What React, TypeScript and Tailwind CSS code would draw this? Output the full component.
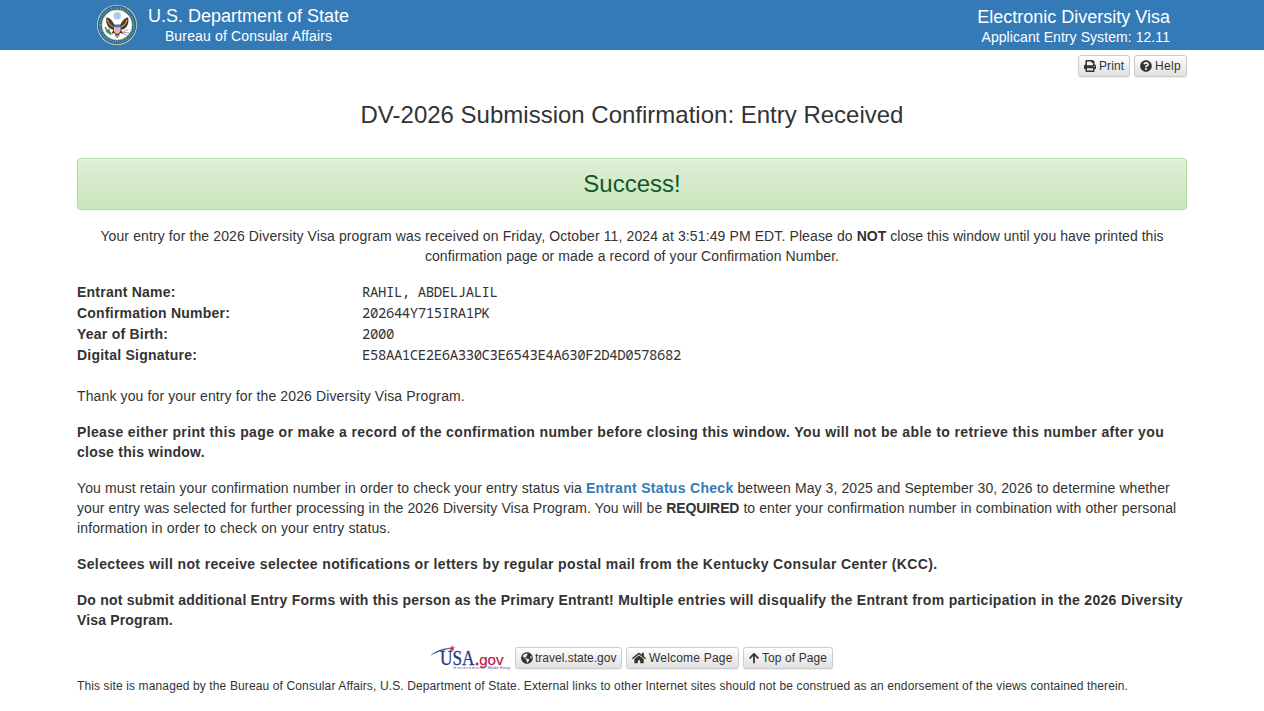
import type { ReactNode } from "react";
import { FaPrint, FaQuestionCircle, FaGlobeAmericas, FaHome, FaArrowUp } from "react-icons/fa";

function SealLogo() {
  return (
    <svg viewBox="0 0 40 40" className="block h-10 w-10">
      <circle cx="20" cy="20" r="20" fill="#d5dc9c" />
      <circle cx="20" cy="20" r="19.2" fill="#22649a" />
      <circle cx="20" cy="20" r="17" fill="none" stroke="#c9cd8e" strokeWidth="2" strokeDasharray="1 1.3" opacity=".6" />
      <circle cx="20" cy="20" r="15" fill="#fff" stroke="#ddd9a0" strokeWidth=".7" />
      <circle cx="20.3" cy="10.8" r="3.8" fill="#a3cdee" stroke="#cfe0e4" strokeWidth=".8" />
      <path d="M17.5 20C16 17.5 14.5 13 9.5 12.5C8.5 16 9.5 20.5 13 23.5L16.5 25L14 29L17.5 28L18.5 30H22L23 28L26.5 29L24 25L28 23.5C31.5 20.5 32 16 31 12.5C26.5 13 25 17.5 23 20Z" fill="#51372b" />
      <path d="M10.5 14.5C11 18 13.5 20.5 16.5 22M30 14.5C29.5 18 27 20.5 24 22" stroke="#c39a68" strokeWidth="1.2" fill="none" />
      <path d="M17.8 15.8L20.3 14.6L22.6 16L22.4 20H18Z" fill="#fff" />
      <path d="M17 21.5H23.5V25.5C23 28 20.2 29 20.2 29C20.2 29 17.3 28 17 25.5Z" fill="#f4cdd3" />
      <path d="M17 19.5H23.5V22.3H17Z" fill="#4670ab" />
      <path d="M18.7 22.5V27.5M20.3 22.5V28.5M21.9 22.5V27.5" stroke="#d98391" strokeWidth=".6" />
      <path d="M14 28C11 28 9.5 25 8.2 22M9 26L13 28.5L11.5 24" stroke="#4d8560" strokeWidth="1.7" fill="none" />
      <path d="M26 26.5L31.5 24.5M26 27.5L32 27.5M26 28.5L31 30.5" stroke="#9aa1a6" strokeWidth=".9" />
      <path d="M17.5 30L20.2 33.5L23 30Z" fill="#b98e5a" />
    </svg>
  );
}

function UsaGovLogo() {
  return (
    <svg viewBox="0 0 82 26" className="block h-[26px] w-[82px] shrink-0">
      <path d="M2 10C9 4.8 16 2.6 23 3.4C16 4 10 6 2 10Z" fill="#34438b" stroke="#34438b" strokeWidth=".3" />
      <path d="M23.3 0L23.9 2.4L26.2 2.2L24.4 3.8L25.1 6L23 4.9L21 6.2L21.7 4L20 2.7L22.3 2.5Z" fill="#cf2149" />
      <text x="11" y="20" fontFamily="Liberation Serif, serif" fontSize="20" fill="#29367f" stroke="#29367f" strokeWidth=".3" textLength="34.5" lengthAdjust="spacingAndGlyphs">USA</text>
      <text x="46" y="20" fontFamily="Liberation Sans, sans-serif" fontSize="15.5" fill="#bf1942" stroke="#bf1942" strokeWidth=".25" textLength="28.5" lengthAdjust="spacingAndGlyphs"><tspan fontWeight="700">.</tspan>gov</text>
      <text x="24" y="24.3" fontFamily="Liberation Sans, sans-serif" fontSize="4.3" fill="#4c578f" textLength="31">Government</text>
      <text x="58.5" y="24.3" fontFamily="Liberation Sans, sans-serif" fontSize="4.3" fill="#4c578f" textLength="22.5">Made Easy</text>
    </svg>
  );
}

function Button({ icon, children, className }: { icon: ReactNode; children: ReactNode; className: string }) {
  return (
    <button className={`flex h-[22px] items-center gap-[3px] whitespace-nowrap rounded-[3px] border border-[#ccc] bg-linear-to-b from-white to-[#e0e0e0] pl-[5px] text-xs leading-[18px] text-[#333] shadow-[inset_0_1px_0_rgba(255,255,255,.15),0_1px_1px_rgba(0,0,0,.075)] ${className}`}>
      <span className="flex pb-px">{icon}</span><span>{children}</span>
    </button>
  );
}

const details = [
  ["Entrant Name:", "RAHIL, ABDELJALIL"],
  ["Confirmation Number:", "202644Y715IRA1PK"],
  ["Year of Birth:", "2000"],
  ["Digital Signature:", "E58AA1CE2E6A330C3E6543E4A630F2D4D0578682"],
];

export default function App() {
  return (
    <div className="h-[711px] overflow-hidden bg-white font-['Liberation_Sans',Arial,sans-serif] text-sm leading-5 text-[#333]">
      <header className="flex h-[50px] justify-between bg-[#337ab7] pl-[97px] pr-[94px] pt-[5px] text-white">
        <div className="flex gap-[11px]">
          <SealLogo />
          <div className="text-center">
            <div className="text-lg leading-[22px]">U.S. Department of State</div>
            <div className="leading-[18px] tracking-[.16px]">Bureau of Consular Affairs</div>
          </div>
        </div>
        <div className="pt-px text-right">
          <div className="text-lg leading-[22px]">Electronic Diversity Visa</div>
          <div className="leading-[18px] tracking-[.07px]">Applicant Entry System: 12.11</div>
        </div>
      </header>
      <main className="mx-auto w-[1110px]">
        <nav className="flex justify-end gap-1 pt-[5px]">
          <Button icon={<FaPrint />} className="w-[52px] tracking-[.1px]">Print</Button>
          <Button icon={<FaQuestionCircle />} className="w-[53px] tracking-[.3px]">Help</Button>
        </nav>
        <h1 className="mt-[25px] text-center text-2xl leading-[26px]">DV-2026 Submission Confirmation: Entry Received</h1>
        <div className="mt-[30px] flex h-[52px] items-center justify-center rounded border border-[#b2dba1] bg-linear-to-b from-[#dff0d8] to-[#c8e5bc] text-2xl text-[#155724] shadow-[inset_0_1px_0_rgba(255,255,255,.25),0_1px_2px_rgba(0,0,0,.05)]">Success!</div>
        <p className="mt-4 whitespace-nowrap text-center tracking-[.11px]">
          Your entry for the 2026 Diversity Visa program was received on Friday, October 11, 2024 at 3:51:49 PM EDT. Please do <b className="tracking-normal">NOT</b><span className="tracking-[.04px]"> close this window until you have printed this</span><br /><span className="tracking-[.09px]">confirmation page or made a record of your Confirmation Number.</span>
        </p>
        <dl className="mt-4 grid grid-cols-[285px_1fr]">
          {details.map(([label, value]) => (
            <div key={label} className="col-span-2 grid h-[21px] grid-cols-subgrid">
              <dt className="font-bold tracking-[.23px]">{label}</dt>
              <dd className="font-['Noto_Sans_Mono','DejaVu_Sans_Mono',monospace] text-[14px] tracking-[-.425px]">{value}</dd>
            </div>
          ))}
        </dl>
        <p className="mt-5 tracking-[.125px]">Thank you for your entry for the 2026 Diversity Visa Program.</p>
        <p className="mt-4 whitespace-nowrap font-bold tracking-[.378px]"><span className="tracking-[.366px]">Please either print this page or make a record of the confirmation number before closing this window.</span><span className="tracking-[.4px]"> You will not be able to retrieve this number after you</span><br /><span className="tracking-[.26px]">close this window.</span></p>
        <p className="mt-4 whitespace-nowrap tracking-[.112px]">
          You must retain your confirmation number in order to check your entry status via <a className="font-bold tracking-[.3px] text-[#337ab7]">Entrant Status Check</a><span className="tracking-[.08px]"> between May 3, 2025 and September 30, 2026 to determine whether</span><br />
          <span className="tracking-[.095px]">your entry was selected for further processing in the 2026 Diversity Visa Program. You will be <b className="tracking-[-.1px]">REQUIRED</b> to enter your confirmation number in combination with other personal</span><br />
          <span className="tracking-[.12px]">information in order to check on your entry status.</span>
        </p>
        <p className="mt-4 whitespace-nowrap font-bold tracking-[.371px]">Selectees will not receive selectee notifications or letters by regular postal mail from the Kentucky Consular Center (KCC).</p>
        <p className="mt-4 whitespace-nowrap font-bold"><span className="tracking-[.225px]">Do not submit additional Entry Forms with this person as the Primary Entrant!</span><span className="tracking-[.31px]"> Multiple entries will disqualify the Entrant from participation in the 2026 Diversity</span><br /><span className="tracking-[.15px]">Visa Program.</span></p>
        <footer className="mt-[15px]">
          <div className="flex h-[26px] gap-1 pl-[352px]">
            <UsaGovLogo />
            <div className="flex gap-1 pt-[2px]">
              <Button icon={<FaGlobeAmericas className="-mr-px" />} className="w-[107px]">travel.state.gov</Button>
              <Button icon={<FaHome className="h-3 w-[14px]" preserveAspectRatio="none" />} className="w-[113px] tracking-[.2px]">Welcome Page</Button>
              <Button icon={<FaArrowUp className="h-3 w-[10px]" preserveAspectRatio="none" />} className="w-[90px] tracking-[.1px]">Top of Page</Button>
            </div>
          </div>
          <p className="mt-[5px] whitespace-nowrap text-xs leading-5 tracking-[.124px]">This site is managed by the Bureau of Consular Affairs, U.S. Department of State. External links to other Internet sites should not be construed as an endorsement of the views contained therein.</p>
        </footer>
      </main>
    </div>
  );
}
